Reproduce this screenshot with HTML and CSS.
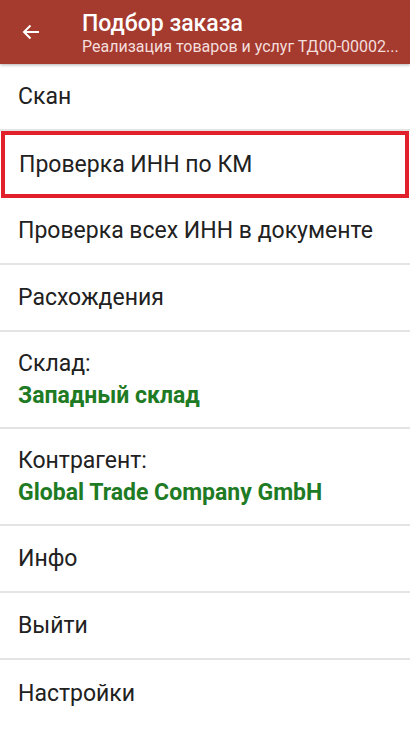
FILE: index.html
```html
<!DOCTYPE html>
<html lang="ru">
<head>
    <meta charset="UTF-8">
    <meta name="viewport" content="width=device-width, initial-scale=1.0">
    <title>Подбор заказа</title>
    <link rel="stylesheet" href="styles.css">
</head>
<body>
    <!-- Toolbar -->
    <div class="toolbar">
        <div class="back">
            <svg width="18" height="16" viewBox="0 0 18 16">
                <path d="M17 8H2M8.5 1.5L2 8l6.5 6.5" fill="none" stroke="#fff" stroke-width="2"/>
            </svg>
        </div>
        <div class="titles">
            <div class="title">Подбор заказа</div>
            <div class="subtitle">Реализация товаров и услуг ТД00-00002...</div>
        </div>
    </div>
    <!-- Menu -->
    <div class="menu">
        <div class="item">Скан</div>
        <div class="item selected">Проверка ИНН по КМ</div>
        <div class="item">Проверка всех ИНН в документе</div>
        <div class="item">Расхождения</div>
        <div class="item double">
            <div>Склад:</div>
            <div class="value">Западный склад</div>
        </div>
        <div class="item double">
            <div>Контрагент:</div>
            <div class="value">Global Trade Company GmbH</div>
        </div>
        <div class="item">Инфо</div>
        <div class="item">Выйти</div>
        <div class="item last">Настройки</div>
    </div>
</body>
</html>
```

FILE: styles.css
```css
body {
    margin: 0;
    padding: 0;
    font-family: Roboto, "Noto Sans", sans-serif;
    background-color: #fff;
    color: #212121;
}

.toolbar {
    height: 64px;
    background-color: #a53a2f;
    display: flex;
    align-items: center;
    box-shadow: 0 1px 3px rgba(0, 0, 0, 0.3);
    color: #fff;
}

.back {
    width: 82px;
    flex-shrink: 0;
    display: flex;
    padding-left: 22px;
    box-sizing: border-box;
}

.back svg {
    display: block;
}

.titles {
    display: flex;
    flex-direction: column;
    white-space: nowrap;
    overflow: hidden;
    padding-top: 2px;
}

.title {
    font-size: 23px;
    font-weight: 500;
    line-height: 27px;
}

.subtitle {
    font-size: 16px;
    line-height: 20px;
    color: #f3dedc;
}

.menu {
    display: flex;
    flex-direction: column;
}

.item {
    height: 67px;
    box-sizing: border-box;
    border-bottom: 2px solid #e4e4e4;
    display: flex;
    align-items: center;
    padding-left: 18px;
    font-size: 23px;
}

.item.selected {
    border: 4px solid #e2202c;
    padding-left: 14px;
    margin-left: 1px;
    margin-right: 1px;
}

.item.double {
    height: 97px;
    flex-direction: column;
    align-items: flex-start;
    justify-content: center;
    line-height: 32px;
}

.item .value {
    color: #1e7b24;
    font-weight: bold;
}

.item.last {
    border-bottom: none;
}
```
